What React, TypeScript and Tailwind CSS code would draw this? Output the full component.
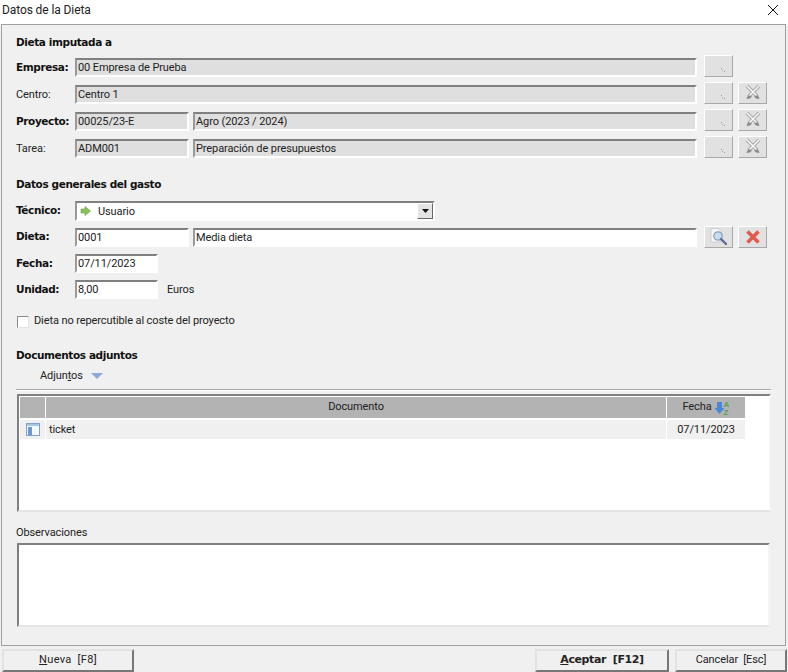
import React from 'react';

const field = 'h-[19px] shrink-0 flex items-center pl-[1px] border-t-2 border-l-2 border-b-2 border-r-2 border-t-[#808080] border-l-[#9a9a9a] border-b-white border-r-white text-[11px] tracking-[-0.1px] leading-none text-[#222] whitespace-nowrap overflow-hidden';
const ro = 'bg-[#dfdfdf]';
const wh = 'bg-white';
const bold = 'font-bold text-[10.5px] text-[#111] font-["DejaVu_Sans"] tracking-[-0.4px]';
const tool = 'h-[22px] w-[29px] shrink-0 flex items-center justify-center bg-[#e1e1e1] border border-t-white border-l-white border-r-[#a8a8a8] border-b-[#a8a8a8]';
const plain = 'text-[11px] tracking-[-0.1px] text-[#222]';
const btn = 'bg-[#f0f0f0] border-2 border-t-[#e2e2e2] border-l-[#e2e2e2] border-r-[#777] border-b-[#777]';

function Dots() {
  return (
    <svg width="27" height="20" viewBox="0 0 27 20">
      <rect x="16" y="12" width="1" height="1" fill="#9a9a9a" />
      <rect x="17" y="14" width="1" height="1" fill="#aaa" />
      <rect x="19" y="15" width="1" height="1" fill="#9a9a9a" />
    </svg>
  );
}

function GrayX() {
  return (
    <svg width="20" height="20" viewBox="0 0 20 20">
      <path d="M4 3 L14 13 M16 3 L6 13" stroke="#a3a3a3" strokeWidth="3.4" />
      <path d="M4 3 L14 13 M16 3 L6 13" stroke="#f8f8f8" strokeWidth="1.6" />
      <path d="M5 12 L3.5 16 L7 15.5 L9 13.5 Z M15 12 L16.5 16 L13 15.5 L11 13.5 Z" fill="#8a8a8a" />
    </svg>
  );
}

function RedX() {
  return (
    <svg width="16" height="16" viewBox="0 0 16 16">
      <path d="M2.5 2.5 L13.5 13.5 M13.5 2.5 L2.5 13.5" stroke="#e05a50" strokeWidth="3.6" />
    </svg>
  );
}

function Lookup() {
  return (
    <svg width="22" height="20" viewBox="0 0 22 20">
      <path d="M3 1.5 H10 L13 4.5 V15 H3 Z" fill="#f4f6f8" stroke="#c9cdd2" />
      <circle cx="10" cy="9" r="4.2" fill="#c6dcf0" stroke="#8ea1b8" strokeWidth="1.3" />
      <path d="M13 12 L18 17" stroke="#5a6f93" strokeWidth="2.4" strokeLinecap="round" />
    </svg>
  );
}

function LockRow({ label, strong, code, name, clear = true }: { label: string; strong?: boolean; code?: string; name: string; clear?: boolean }) {
  return (
    <div className="h-[22px] flex items-end mb-[5px]">
      <span className={`w-[59px] h-[19px] shrink-0 flex items-center ${strong ? bold : `${plain} pt-[2px]`}`}>{label}</span>
      {code ? (
        <>
          <div className={`${field} ${ro} w-[114px] mr-[4px]`}>{code}</div>
          <div className={`${field} ${ro} w-[504px]`}>{name}</div>
        </>
      ) : (
        <div className={`${field} ${ro} w-[622px]`}>{name}</div>
      )}
      <div className={`${tool} ml-[7px]`}><Dots /></div>
      {clear && <div className={`${tool} ml-[5px]`}><GrayX /></div>}
    </div>
  );
}

export default function App() {
  return (
    <div className="w-[788px] h-[672px] bg-[#f0f0f0] flex flex-col font-['Roboto',sans-serif] overflow-hidden">
      {/* barra de titulo */}
      <div className="h-[24px] shrink-0 bg-white flex items-center justify-between pl-[2px] pr-[9px]">
        <span className="text-[12px] tracking-[-0.1px] text-[#222] -mt-[5px]">Datos de la Dieta</span>
        <svg className="-mt-[5px]" width="12" height="12" viewBox="0 0 12 12">
          <path d="M1 1 L11 11 M11 1 L1 11" stroke="#111" strokeWidth="1" fill="none" />
        </svg>
      </div>

      <div className="h-[622px] w-[785px] ml-[1px] shrink-0 border border-[#a0a0a0] bg-[#f0f0f0] pl-[14px]">
        <div className={`${bold} h-[17px] mt-[9px] mb-[4px] leading-[17px]`}>Dieta imputada a</div>
        <LockRow label="Empresa:" strong name="00 Empresa de Prueba" clear={false} />
        <LockRow label="Centro:" name="Centro 1" />
        <LockRow label="Proyecto:" strong code="00025/23-E" name="Agro (2023 / 2024)" />
        <LockRow label="Tarea:" code="ADM001" name="Preparación de presupuestos" />

        <div className={`${bold} h-[17px] mt-[18px] mb-[8px] leading-[17px]`}>Datos generales del gasto</div>

        <div className="h-[20px] flex items-center mb-[5px]">
          <span className={`w-[59px] shrink-0 ${bold}`}>Técnico:</span>
          <div className={`${field} ${wh} h-[20px] w-[360px] justify-between pr-0 pl-[3px]`}>
            <span className="flex items-center gap-[7px]">
              <svg width="11" height="10" viewBox="0 0 11 10">
                <path d="M1 3 H5 V0.5 L10.5 5 L5 9.5 V7 H1 Z" fill="#86c257" stroke="#6e9c45" strokeWidth="0.6" />
              </svg>
              Usuario
            </span>
            <div className="h-[16px] w-[16px] bg-[#e4e4e4] border border-t-white border-l-white border-r-[#666] border-b-[#666] flex items-center justify-center">
              <svg width="7" height="4" viewBox="0 0 7 4"><path d="M0 0 H7 L3.5 4 Z" fill="#111" /></svg>
            </div>
          </div>
        </div>

        <div className="h-[22px] flex items-center mb-[6px]">
          <span className={`w-[59px] shrink-0 ${bold}`}>Dieta:</span>
          <div className={`${field} ${wh} w-[114px] mr-[4px]`}>0001</div>
          <div className={`${field} ${wh} w-[504px]`}>Media dieta</div>
          <div className={`${tool} ml-[7px]`}><Lookup /></div>
          <div className={`${tool} ml-[5px]`}><RedX /></div>
        </div>

        <div className="h-[19px] flex items-center mb-[7px]">
          <span className={`w-[59px] shrink-0 ${bold}`}>Fecha:</span>
          <div className={`${field} ${wh} w-[83px]`}>07/11/2023</div>
        </div>

        <div className="h-[19px] flex items-center mb-[16px]">
          <span className={`w-[59px] shrink-0 ${bold}`}>Unidad:</span>
          <div className={`${field} ${wh} w-[83px]`}>8,00</div>
          <span className={`ml-[9px] pt-[2px] ${plain}`}>Euros</span>
        </div>

        <div className="h-[13px] flex items-center">
          <div className="h-[12px] w-[12px] ml-[1px] bg-white border border-t-[#8a8a8a] border-l-[#8a8a8a] border-r-[#e4e4e4] border-b-[#e4e4e4]" />
          <span className={`ml-[5px] ${plain}`}>Dieta no repercutible al coste del proyecto</span>
        </div>

        <div className={`${bold} h-[17px] mt-[19px] leading-[17px]`}>Documentos adjuntos</div>

        <div className="h-[16px] mt-[4px] ml-[24px] flex items-center">
          <span className={plain}>Adjun<span className="underline">t</span>os</span>
          <svg className="ml-[8px]" width="12" height="6" viewBox="0 0 12 6"><path d="M0 0 H12 L6 6 Z" fill="#8fa8e0" /></svg>
        </div>

        <div className="h-[2px] w-[755px] mt-[5px] bg-[#a8a8a8] border-b border-white" />

        <div className="h-[118px] w-[754px] mt-[3px] ml-[1px] bg-white border-2 border-t-[#808080] border-l-[#808080] border-r-[#f4f4f4] border-b-[#e4e4e4] pl-[1px] pt-[1px]">
          <div className={`flex h-[21px] ${plain} gap-[1px]`}>
            <div className="w-[25px] bg-[#b3b3b3]" />
            <div className="w-[620px] bg-[#b3b3b3] flex items-center justify-center">Documento</div>
            <div className="w-[78px] bg-[#b3b3b3] flex items-center justify-center gap-[2px]">
              Fecha
              <svg width="16" height="16" viewBox="0 0 16 16">
                <path d="M2 2 H7 V8 H9.5 L4.5 14 L-0.5 8 H2 Z" fill="#4a86dc" transform="translate(1 0)" />
                <text x="9.5" y="7" fontSize="8" fontWeight="bold" fill="#5aa055" fontFamily="Liberation Sans">A</text>
                <text x="9.5" y="15" fontSize="8" fontWeight="bold" fill="#5aa055" fontFamily="Liberation Sans">Z</text>
              </svg>
            </div>
          </div>
          <div className={`flex h-[19px] mt-[2px] ${plain} gap-[1px]`}>
            <div className="w-[25px] bg-[#f0f0f0] flex items-center justify-center">
              <svg width="14" height="13" viewBox="0 0 14 13">
                <rect x="0.5" y="0.5" width="13" height="12" fill="#f5f9fd" stroke="#7ea2cb" />
                <rect x="1" y="1" width="12" height="2" fill="#a9c6e4" />
                <rect x="2" y="4" width="4" height="8" fill="#6a9bd0" />
              </svg>
            </div>
            <div className="w-[620px] bg-[#f0f0f0] flex items-center pl-[3px] pt-[2px]">ticket</div>
            <div className="w-[78px] bg-[#f0f0f0] flex items-center justify-center pt-[2px]">07/11/2023</div>
          </div>
        </div>

        <div className={`${plain} h-[15px] mt-[13px] leading-[15px]`}>Observaciones</div>
        <div className="h-[84px] w-[753px] mt-[3px] ml-[1px] bg-white border-2 border-t-[#808080] border-l-[#808080] border-r-[#f4f4f4] border-b-[#e4e4e4]" />
      </div>

      <div className={`flex mt-[3px] h-[23px] shrink-0 ${plain}`}>
        <button className={`w-[132px] ml-[2px] ${btn}`}>
          <span className="tracking-[0.3px]"><span className="underline">N</span>ueva&nbsp; [F8]</span>
        </button>
        <button className={`w-[134px] ml-[401px] ${btn} font-bold font-['DejaVu_Sans'] tracking-[-0.4px]`}>
          <span className="underline">A</span>ceptar&nbsp; [F12]
        </button>
        <button className={`w-[112px] ml-[6px] ${btn}`}>
          Cancelar&nbsp; [Esc]
        </button>
      </div>
    </div>
  );
}
